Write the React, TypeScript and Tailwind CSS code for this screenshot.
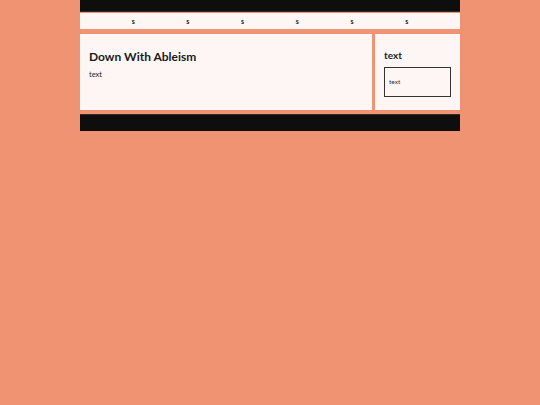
export default function App() {
  return (
    <div className="min-h-[405px] w-full bg-[#f09373]" style={{ fontFamily: 'Lato, "Open Sans", sans-serif' }}>
      <div className="mx-auto w-[380px]">
        <header className="h-[12px] bg-[#0e0e0e] border-b border-[#3a2a26]" />
        <nav className="mt-px flex h-[16px] items-center justify-evenly bg-[#fdf6f5] text-[7px] font-bold text-[#222]">
          <span>s</span>
          <span>s</span>
          <span>s</span>
          <span>s</span>
          <span>s</span>
          <span>s</span>
        </nav>
        <main className="mt-[5px] flex gap-[3px]">
          <section className="h-[76px] w-[292px] bg-[#fdf6f5] px-[9px] pt-[14px]">
            <h1 className="text-[12px] font-bold leading-[17px] text-[#1a1a1a]">Down With Ableism</h1>
            <p className="mt-[5px] text-[7.5px] leading-[10px] text-[#222]">text</p>
          </section>
          <aside className="h-[76px] flex-1 bg-[#fdf6f5] px-[9px] pt-[15px]">
            <h2 className="text-[10px] font-bold leading-[12px] text-[#1a1a1a]">text</h2>
            <div className="mt-[6px] flex h-[30px] w-[67px] items-center border border-[#333] px-[4px] text-[6.5px] text-[#333]">
              text
            </div>
          </aside>
        </main>
        <footer className="mt-[4px] h-[17px] bg-[#0e0e0e] border-t border-[#3a2a26]" />
      </div>
    </div>
  );
}
